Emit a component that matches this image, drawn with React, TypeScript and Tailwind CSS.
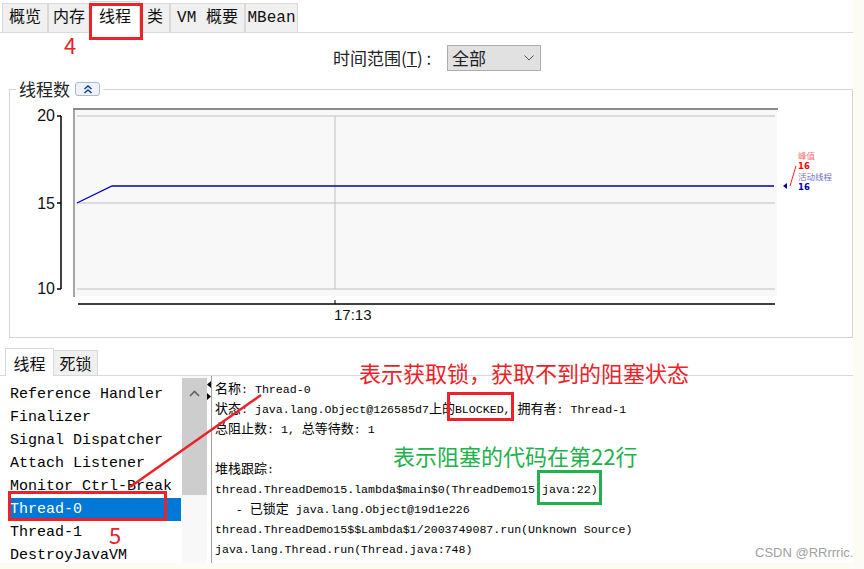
import React from 'react';

const MONO = "font-['Liberation_Mono','Noto_Sans_CJK_SC',monospace]";
const SANS = "font-['Noto_Sans_CJK_SC','Liberation_Sans',sans-serif]";

const TOP_TABS = [
  { label: '概览', w: 'w-[46px]' },
  { label: '内存', w: 'w-[42px]' },
  { label: '线程', w: 'w-[50px]', active: true },
  { label: '类', w: 'w-[30px]' },
  { label: 'VM 概要', w: 'w-[75px]' },
  { label: 'MBean', w: 'w-[53px]' },
];

const THREADS = [
  'Reference Handler',
  'Finalizer',
  'Signal Dispatcher',
  'Attach Listener',
  'Monitor Ctrl-Break',
  'Thread-0',
  'Thread-1',
  'DestroyJavaVM',
];

// CJK glyphs in the Java "Monospaced" font are wider than the Latin cells
function Cjk({ children }: { children: React.ReactNode }) {
  return <span className={`${SANS} text-[13px] leading-none`}>{children}</span>;
}

function Line({ children }: { children?: React.ReactNode }) {
  return <div className="h-[20px] leading-[20px]">{children ?? '\u00a0'}</div>;
}

function ThreadChart() {
  return (
    <svg width={842} height={247} viewBox="10 90 842 247" className="block">
      {/* y axis */}
      <g fontFamily="'Liberation Sans', sans-serif" fontSize="16" fill="#111">
        <text x={55} y={121} textAnchor="end">20</text>
        <text x={55} y={209} textAnchor="end">15</text>
        <text x={55} y={294} textAnchor="end">10</text>
      </g>
      <line x1={61} y1={116} x2={61} y2={289} stroke="#000" strokeWidth={1.5} />
      <line x1={57} y1={116} x2={61} y2={116} stroke="#000" strokeWidth={1.5} />
      <line x1={57} y1={203} x2={61} y2={203} stroke="#000" strokeWidth={1.5} />
      <line x1={57} y1={289} x2={61} y2={289} stroke="#000" strokeWidth={1.5} />

      {/* plot area */}
      <rect x={73} y={108} width={704} height={188} fill="#f8f8f8" />
      <line x1={73} y1={109} x2={778} y2={109} stroke="#8a8a8a" strokeWidth={2} />
      <line x1={74} y1={108} x2={74} y2={297} stroke="#8a8a8a" strokeWidth={1.5} />
      {[116, 203, 289].map(y => (
        <line key={y} x1={77} y1={y} x2={775} y2={y} stroke="#c0c0c0" strokeWidth={1} />
      ))}
      <line x1={335} y1={116} x2={335} y2={289} stroke="#c0c0c0" strokeWidth={1} />
      <polyline points="77,203 112,186 774,186" fill="none" stroke="#0000b0" strokeWidth={1.3} />

      {/* x axis */}
      <line x1={78} y1={304} x2={775} y2={304} stroke="#000" strokeWidth={1.5} />
      <line x1={335} y1={300} x2={335} y2={304} stroke="#000" strokeWidth={1} />
      <text x={334} y={320} fontFamily="'Liberation Sans', sans-serif" fontSize="15" fill="#111">17:13</text>

      {/* legend */}
      <polygon points="783,186 787,183 787,189" fill="#0000aa" />
      <line x1={790} y1={186} x2={796} y2={166} stroke="#ff2020" strokeWidth={1} />
      <g fontFamily="'Noto Sans CJK SC', sans-serif" fontSize="8.5">
        <text x={798} y={159} fill="#ff7070">峰值</text>
        <text x={798} y={169} fill="#ff0000" fontWeight="bold" fontFamily="'DejaVu Sans', sans-serif">16</text>
        <text x={798} y={180} fill="#7070c8">活动线程</text>
        <text x={798} y={190} fill="#0000b0" fontWeight="bold" fontFamily="'DejaVu Sans', sans-serif">16</text>
      </g>
    </svg>
  );
}

export default function App() {
  return (
    <div className={`relative w-[864px] h-[569px] overflow-hidden bg-[#fcfbf4] ${SANS}`}>
      <div className="w-[853px] h-[563px] bg-white flex flex-col">
        {/* top tabs */}
        <div className="h-[33px] shrink-0 flex items-end pl-[2px] border-b border-[#d9d9d9]">
          {TOP_TABS.map(t => (
            <div
              key={t.label}
              className={`${t.w} flex items-center justify-center border border-b-0 text-[16px] text-[#111] ${MONO} ${
                t.active
                  ? 'h-[32px] bg-white border-[#d9d9d9] -mb-px'
                  : 'h-[29px] bg-[#f0f0f0] border-[#d9d9d9]'
              }`}
            >
              {t.label}
            </div>
          ))}
        </div>

        {/* time range */}
        <div className="h-[56px] shrink-0 flex items-start pt-[12px] pl-[333px] gap-[7px]">
          <span className="w-[107px] text-[17px] leading-[26px] text-[#222] whitespace-nowrap">
            时间范围(<span className="underline">T</span>)&nbsp;:
          </span>
          <div className="w-[94px] h-[26px] bg-[#e1e1e1] border border-[#adadad] flex items-center justify-between pl-[4px] pr-[6px]">
            <span className="text-[17px] text-[#222]">全部</span>
            <svg width="10" height="6" viewBox="0 0 10 6">
              <path d="M0.5 0.5 L5 5 L9.5 0.5" fill="none" stroke="#555" strokeWidth="1" />
            </svg>
          </div>
        </div>

        {/* thread count group */}
        <div className="relative ml-[9px] w-[844px] h-[249px] shrink-0 border border-[#d5d5d5]">
          <div className="absolute -top-[13px] left-[6px] flex items-center gap-[5px] bg-white px-[3px]">
            <span className="text-[17px] leading-[24px] text-[#222]">线程数</span>
            <div className="w-[25px] h-[14px] rounded-[3px] border border-[#a9b9d4] bg-[#eef2f9] flex items-center justify-center">
              <svg width="10" height="9" viewBox="0 0 10 9">
                <path d="M1.5 4 L5 1 L8.5 4 M1.5 8 L5 5 L8.5 8" fill="none" stroke="#1c3f94" strokeWidth="1.6" />
              </svg>
            </div>
          </div>
          <ThreadChart />
        </div>

        {/* bottom tabs */}
        <div className="h-[38px] shrink-0 flex items-end pl-[5px] border-b border-[#d9d9d9]">
          <div className="w-[49px] h-[28px] -mb-px bg-white border border-b-0 border-[#d9d9d9] flex items-center justify-center text-[16px] text-[#111]">
            线程
          </div>
          <div className="w-[44px] h-[25px] bg-[#f0f0f0] border border-b-0 border-l-0 border-[#d9d9d9] flex items-center justify-center text-[16px] text-[#111]">
            死锁
          </div>
        </div>

        {/* bottom content */}
        <div className="flex-1 flex min-h-0">
          <div className={`w-[182px] shrink-0 pt-[7px] ${MONO} text-[15px] text-black`}>
            {THREADS.map(name => (
              <div
                key={name}
                className={`ml-[9px] w-[172px] h-[23px] leading-[23px] pl-[1px] whitespace-nowrap overflow-hidden ${
                  name === 'Thread-0' ? 'bg-[#0078d7] text-white' : ''
                }`}
              >
                {name}
              </div>
            ))}
          </div>

          <div className="w-[25px] shrink-0 pt-[2px] bg-[#f8f8f8]">
            <div className="h-[117px] bg-[#cdcdcd] flex justify-center pt-[12px]">
              <svg width="11" height="7" viewBox="0 0 11 7">
                <path d="M1 6 L5.5 1.5 L10 6" fill="none" stroke="#606060" strokeWidth="1.6" />
              </svg>
            </div>
          </div>

          <div className="w-[5px] shrink-0 border-r border-[#a0a0a0] flex flex-col items-start pt-[5px] gap-[5px]">
            <svg width="4" height="7" viewBox="0 0 4 7"><polygon points="0,3.5 4,0 4,7" fill="#000" /></svg>
            <svg width="4" height="7" viewBox="0 0 4 7"><polygon points="4,3.5 0,0 0,7" fill="#000" /></svg>
          </div>

          <div className={`flex-1 pl-[3px] pt-[4px] ${MONO} text-[11.6px] text-black whitespace-nowrap`}>
            <Line><Cjk>名称</Cjk>: Thread-0</Line>
            <Line><Cjk>状态</Cjk>: java.lang.Object@126585d7<Cjk>上的</Cjk>BLOCKED, <Cjk>拥有者</Cjk>: Thread-1</Line>
            <Line><Cjk>总阻止数</Cjk>: 1, <Cjk>总等待数</Cjk>: 1</Line>
            <Line />
            <Line><Cjk>堆栈跟踪</Cjk>:</Line>
            <Line>thread.ThreadDemo15.lambda$main$0(ThreadDemo15.java:22)</Line>
            <Line>&nbsp;&nbsp;&nbsp;- <Cjk>已锁定</Cjk> java.lang.Object@19d1e226</Line>
            <Line>thread.ThreadDemo15$$Lambda$1/2003749087.run(Unknown Source)</Line>
            <Line>java.lang.Thread.run(Thread.java:748)</Line>
          </div>
        </div>
      </div>

      {/* annotations drawn over the screenshot */}
      <div className="absolute left-[89px] top-[3px] w-[54px] h-[37px] border-[3px] border-[#ec2228]" />
      <div className="absolute left-[64px] top-[33px] text-[22px] leading-[22px] text-[#ec2228]">4</div>
      <div className="absolute left-[8px] top-[491px] w-[159px] h-[30px] border-[3px] border-[#ec2228]" />
      <div className="absolute left-[109px] top-[524px] text-[22px] leading-[20px] text-[#ec2228]">5</div>
      <div className="absolute left-[447px] top-[392px] w-[67px] h-[29px] border-[3px] border-[#ec2228]" />
      <div className="absolute left-[537px] top-[470px] w-[65px] h-[35px] border-[3px] border-[#22b14c]" />
      <div className="absolute left-[359px] top-[358px] text-[22px] leading-[28px] text-[#ec2228] whitespace-nowrap">
        表示获取锁，获取不到的阻塞状态
      </div>
      <div className="absolute left-[393px] top-[441px] text-[22px] leading-[28px] text-[#22b14c] whitespace-nowrap">
        表示阻塞的代码在第22行
      </div>
      <svg className="absolute left-0 top-0 pointer-events-none" width={864} height={569}>
        <line x1={130} y1={487} x2={261} y2={395} stroke="#ec2228" strokeWidth={2.5} />
      </svg>
      <div className="absolute left-[755px] top-[545px] text-[13px] leading-[16px] text-[#a0a0a0] font-['Liberation_Sans',sans-serif]">
        CSDN @RRrrric.
      </div>
    </div>
  );
}
